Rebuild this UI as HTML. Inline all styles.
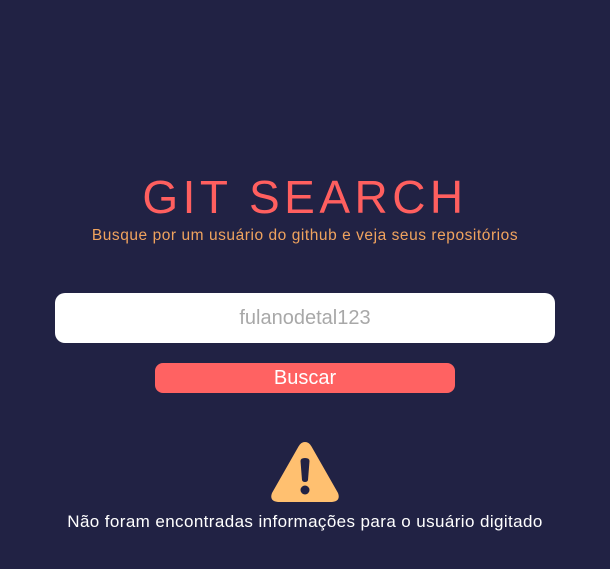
<!DOCTYPE html>
<html><head><style>
body{margin:0;width:610px;height:569px;background:#212244;font-family:"Liberation Sans",sans-serif;position:relative;overflow:hidden}
.t{position:absolute;left:0;width:610px;text-align:center;white-space:nowrap}
h1{position:absolute;margin:0;left:0;width:610px;top:170px;text-align:center;color:#ff5f5f;font-weight:normal;font-size:46px;letter-spacing:4.5px;line-height:54px}
.sub{top:227px;color:#f0a35e;font-size:15.5px;letter-spacing:0.55px;line-height:18px}
.in{position:absolute;left:55px;top:293px;width:500px;height:50px;background:#fff;border-radius:10px;color:#a8a8a8;font-size:20px;line-height:50px;text-align:center}
.btn{position:absolute;left:155px;top:363px;width:300px;height:30px;background:#ff6262;border-radius:8px;color:#fff;font-size:20px;line-height:30px;text-align:center}
.msg{top:512px;color:#fff;font-size:17px;letter-spacing:0.4px;line-height:20px}
</style></head><body>
<h1>GIT SEARCH</h1>
<div class="t sub">Busque por um usuário do github e veja seus repositórios</div>
<div class="in">fulanodetal123</div>
<div class="btn">Buscar</div>
<svg style="position:absolute;left:268px;top:439px" width="74" height="66" viewBox="0 0 74 66">
<path d="M37 3 Q41 3 43.5 7.5 L70 54 Q73 62 64 63 L10 63 Q1 62 4 54 L30.5 7.5 Q33 3 37 3Z" fill="#ffc070"/>
<path d="M32.5 22 Q32.5 19 37 19 Q41.5 19 41.5 22 L40 41 Q39.5 43 37 43 Q34.5 43 34 41Z" fill="#212244"/>
<circle cx="37" cy="51" r="4.5" fill="#212244"/>
</svg>
<div class="t msg">Não foram encontradas informações para o usuário digitado</div>
</body></html>
